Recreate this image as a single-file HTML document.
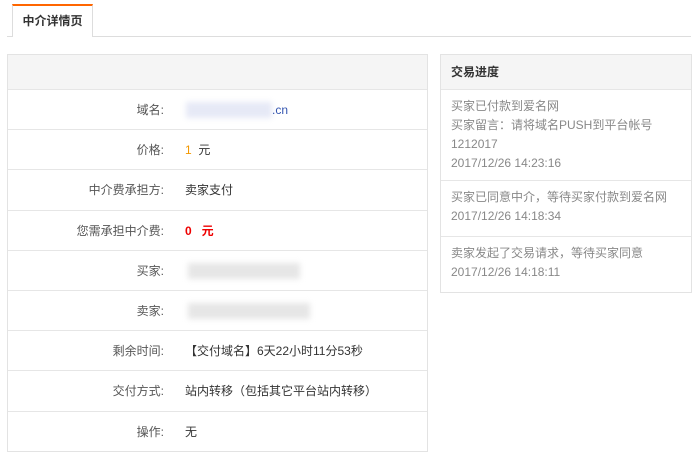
<!DOCTYPE html>
<html><head><meta charset="utf-8"><style>
*{margin:0;padding:0;box-sizing:border-box}
body{width:700px;height:457px;background:#fff;font-family:"Liberation Sans","Noto Sans CJK SC",sans-serif;font-size:12px;color:#333;position:relative;overflow:hidden}
.tabline{position:absolute;left:7px;top:36px;width:684px;height:1px;background:#ddd}
.tab{position:absolute;left:12px;top:4px;width:81px;height:33px;border:1px solid #ddd;border-top:2px solid #f60;border-bottom:none;background:#fff;font-weight:bold;font-size:12px;color:#333;text-align:center;line-height:30px}
.lp{position:absolute;left:7px;top:54px;width:421px;height:398px;border:1px solid #e3e3e3}
.hd{height:35px;background:#f5f5f5;border-bottom:1px solid #e6e6e6}
.row{height:40.2px;border-bottom:1px solid #e6e6e6;position:relative;line-height:40px}
.row:last-child{border-bottom:none}
.lb{position:absolute;right:263px;color:#555}
.v{position:absolute;left:177px;color:#333}
.blur{position:absolute;top:12px;height:16px;filter:blur(3px);background:#e6e9f6}
.rp{position:absolute;left:440px;top:54px;width:252px;height:239px;border:1px solid #e3e3e3}
.rp .hd{line-height:35px;padding-left:10px;font-weight:bold;color:#333}
.it{padding:7px 10px;color:#888;line-height:19px;border-bottom:1px solid #e6e6e6}
.it:last-child{border-bottom:none}
</style></head><body>
<div class="tabline"></div>
<div class="tab">中介详情页</div>
<div class="lp">
<div class="hd"></div>
<div class="row"><span class="lb">域名:</span><span class="blur" style="left:178px;width:86px"></span><span class="v" style="left:264px;color:#3455b0">.cn</span></div>
<div class="row"><span class="lb">价格:</span><span class="v"><span style="color:#f39800">1</span>&nbsp; 元</span></div>
<div class="row"><span class="lb">中介费承担方:</span><span class="v">卖家支付</span></div>
<div class="row"><span class="lb">您需承担中介费:</span><span class="v" style="color:#e00;font-weight:bold">0&nbsp;&nbsp; 元</span></div>
<div class="row"><span class="lb">买家:</span><span class="blur" style="left:180px;width:112px;background:#e6e6e6"></span></div>
<div class="row"><span class="lb">卖家:</span><span class="blur" style="left:180px;width:122px;background:#e6e6e6"></span></div>
<div class="row"><span class="lb">剩余时间:</span><span class="v">【交付域名】6天22小时11分53秒</span></div>
<div class="row"><span class="lb">交付方式:</span><span class="v">站内转移（包括其它平台站内转移）</span></div>
<div class="row"><span class="lb">操作:</span><span class="v">无</span></div>
</div>
<div class="rp">
<div class="hd">交易进度</div>
<div class="it" style="height:91px">买家已付款到爱名网<br>买家留言：请将域名PUSH到平台帐号<br>1212017<br>2017/12/26 14:23:16</div>
<div class="it" style="height:56px">买家已同意中介，等待买家付款到爱名网<br>2017/12/26 14:18:34</div>
<div class="it">卖家发起了交易请求，等待买家同意<br>2017/12/26 14:18:11</div>
</div>
</body></html>
